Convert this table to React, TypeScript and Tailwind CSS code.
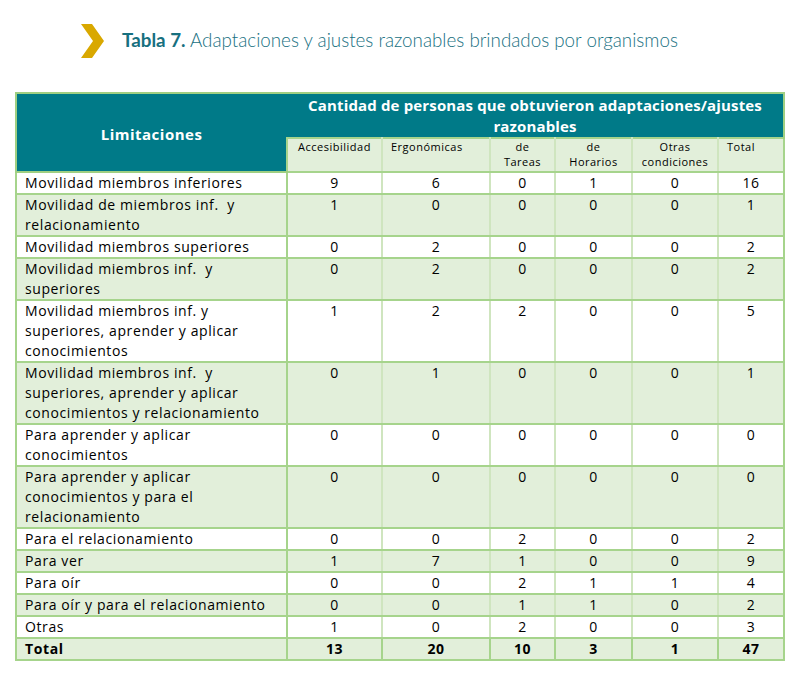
import React from 'react'

type Row = {
  label: string[]
  values: number[]
}

const rows: Row[] = [
  { label: ['Movilidad miembros inferiores'], values: [9, 6, 0, 1, 0, 16] },
  { label: ['Movilidad de miembros inf.  y', 'relacionamiento'], values: [1, 0, 0, 0, 0, 1] },
  { label: ['Movilidad miembros superiores'], values: [0, 2, 0, 0, 0, 2] },
  { label: ['Movilidad miembros inf.  y', 'superiores'], values: [0, 2, 0, 0, 0, 2] },
  { label: ['Movilidad miembros inf. y', 'superiores, aprender y aplicar', 'conocimientos'], values: [1, 2, 2, 0, 0, 5] },
  { label: ['Movilidad miembros inf.  y', 'superiores, aprender y aplicar', 'conocimientos y relacionamiento'], values: [0, 1, 0, 0, 0, 1] },
  { label: ['Para aprender y aplicar', 'conocimientos'], values: [0, 0, 0, 0, 0, 0] },
  { label: ['Para aprender y aplicar', 'conocimientos y para el', 'relacionamiento'], values: [0, 0, 0, 0, 0, 0] },
  { label: ['Para el relacionamiento'], values: [0, 0, 2, 0, 0, 2] },
  { label: ['Para ver'], values: [1, 7, 1, 0, 0, 9] },
  { label: ['Para oír'], values: [0, 0, 2, 1, 1, 4] },
  { label: ['Para oír y para el relacionamiento'], values: [0, 0, 1, 1, 0, 2] },
  { label: ['Otras'], values: [1, 0, 2, 0, 0, 3] },
]

const totals = [13, 20, 10, 3, 1, 47]

function Chevron() {
  return (
    <svg width="24" height="34" viewBox="0 0 24 34" className="shrink-0">
      <polygon points="0,0 11,0 23,17 11,34 0,34 12,17" fill="#d9a800" />
    </svg>
  )
}

export default function App() {
  return (
    <div className="w-[804px] h-[676px] bg-white text-black" style={{ fontFamily: '"Open Sans", Lato, sans-serif' }}>
      <div className="flex items-center gap-[17px] pl-[81px] pt-[23px] h-[58px]">
        <Chevron />
        <p className="text-[18.8px] text-[#17707f] font-light" style={{ fontFamily: 'Lato, sans-serif' }}>
          <span className="font-bold">Tabla 7.</span> Adaptaciones y ajustes razonables brindados por organismos
        </p>
      </div>

      <div className="pl-[15px] pt-[34px]">
        <table className="border-collapse table-fixed w-[768px] text-[14px] leading-[20px] tracking-[0.6px]">
          <colgroup>
            <col className="w-[271px]" />
            <col className="w-[95px]" />
            <col className="w-[108px]" />
            <col className="w-[65px]" />
            <col className="w-[77px]" />
            <col className="w-[86px]" />
            <col className="w-[66px]" />
          </colgroup>
          <thead>
            <tr className="h-[42px]">
              <th rowSpan={2} className="bg-[#007a88] text-white font-bold text-[15px] tracking-[0.5px] border-2 border-[#9fcf82] border-r-0 pt-[2px]">
                Limitaciones
              </th>
              <th colSpan={6} className="bg-[#007a88] text-white font-bold text-[15px] tracking-[0.15px] leading-[21px] border-2 border-[#9fcf82] border-l-0 border-b-0 align-top pt-[1px]">
                Cantidad de personas que obtuvieron adaptaciones/ajustes
                <br />
                razonables
              </th>
            </tr>
            <tr className="h-[34px] text-[11px] leading-[15px] font-normal tracking-[0.5px]">
              <th className="bg-[#e2efda] border-2 border-[#a6d48c] border-r-[#cfe5bf] font-normal align-top">Accesibilidad</th>
              <th className="bg-[#e2efda] border-2 border-[#a6d48c] border-r-[#cfe5bf] font-normal align-top text-left pl-[8px]">Ergonómicas</th>
              <th className="bg-[#e2efda] border-2 border-[#a6d48c] border-r-[#cfe5bf] font-normal align-top">de<br />Tareas</th>
              <th className="bg-[#e2efda] border-2 border-[#a6d48c] border-r-[#cfe5bf] font-normal align-top">de<br />Horarios</th>
              <th className="bg-[#e2efda] border-2 border-[#a6d48c] border-r-[#cfe5bf] font-normal align-top">Otras<br />condiciones</th>
              <th className="bg-[#e2efda] border-2 border-[#a6d48c] font-normal align-top text-left pl-[8px]">Total</th>
            </tr>
          </thead>
          <tbody>
            {rows.map((row, i) => (
              <tr key={i} className={i % 2 === 0 ? 'bg-white' : 'bg-[#e2efda]'}>
                <td className="border-2 border-[#a6d48c] align-top pl-[8px] whitespace-pre">
                  {row.label.join('\n')}
                </td>
                {row.values.map((v, j) => (
                  <td
                    key={j}
                    className={
                      j === 5
                        ? 'border-2 border-[#a6d48c] border-l-[#cfe5bf] align-top text-center'
                        : 'border-2 border-[#a6d48c] border-r-[#cfe5bf] align-top text-center'
                    }
                  >
                    {v}
                  </td>
                ))}
              </tr>
            ))}
            <tr className="bg-[#e2efda] font-bold">
              <td className="border-2 border-[#a6d48c] pl-[8px]">Total</td>
              {totals.map((v, j) => (
                <td key={j} className="border-2 border-[#a6d48c] text-center">
                  {v}
                </td>
              ))}
            </tr>
          </tbody>
        </table>
      </div>
    </div>
  )
}
